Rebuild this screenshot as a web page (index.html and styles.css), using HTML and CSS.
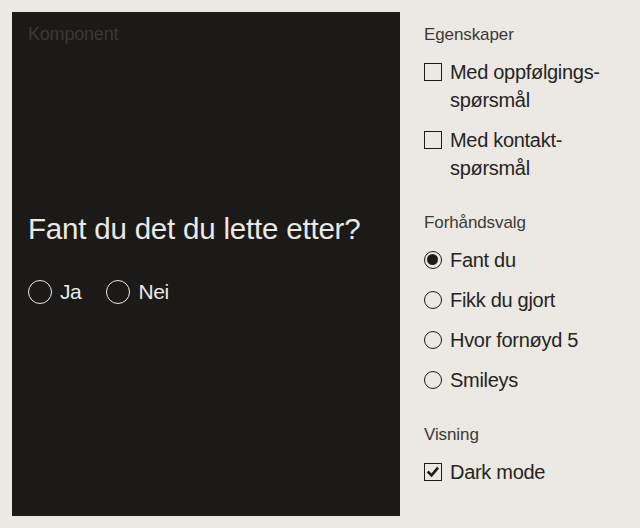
FILE: index.html
```html
<!DOCTYPE html>
<html lang="no">
<head>
<meta charset="utf-8">
<link rel="stylesheet" href="styles.css">
</head>
<body>
<div class="page">
  <section class="preview">
    <div class="preview-label">Komponent</div>
    <div class="question">
      <h1 class="q-title">Fant du det du lette etter?</h1>
      <div class="q-options">
        <label class="q-opt"><span class="q-radio"></span>Ja</label>
        <label class="q-opt"><span class="q-radio"></span>Nei</label>
      </div>
    </div>
  </section>
  <aside class="controls">
    <div class="group">
      <div class="group-label">Egenskaper</div>
      <div class="items">
        <label class="item"><span class="box"></span><span class="txt">Med oppfølgings-<br>spørsmål</span></label>
        <label class="item"><span class="box"></span><span class="txt">Med kontakt-<br>spørsmål</span></label>
      </div>
    </div>
    <div class="group">
      <div class="group-label">Forhåndsvalg</div>
      <div class="items">
        <label class="item"><span class="radio checked"></span><span class="txt">Fant du</span></label>
        <label class="item"><span class="radio"></span><span class="txt">Fikk du gjort</span></label>
        <label class="item"><span class="radio"></span><span class="txt">Hvor fornøyd 5</span></label>
        <label class="item"><span class="radio"></span><span class="txt">Smileys</span></label>
      </div>
    </div>
    <div class="group">
      <div class="group-label">Visning</div>
      <div class="items">
        <label class="item"><span class="box checked"><svg viewBox="0 0 18 18" width="18" height="18"><path d="M4.6 9.4 L7.6 12.4 L13.2 5.6" fill="none" stroke="#1d1c1a" stroke-width="2.6" stroke-linecap="square"/></svg></span><span class="txt">Dark mode</span></label>
      </div>
    </div>
  </aside>
</div>
</body>
</html>
```
FILE: styles.css
```css
* { box-sizing: border-box; }
html, body { margin: 0; padding: 0; }
body {
  background: #ece9e4;
  font-family: "Liberation Sans", Arial, sans-serif;
  color: #262422;
}
.page {
  display: flex;
  gap: 24px;
  padding: 12px;
  height: 528px;
}
.preview {
  width: 388px;
  height: 504px;
  background: #1b1a18;
  padding: 10px 16px;
  display: flex;
  flex-direction: column;
}
.preview-label {
  font-size: 18px;
  line-height: 24px;
  color: #3a3835;
  letter-spacing: -0.2px;
}
.question {
  margin-top: 165px;
}
.q-title {
  margin: 0;
  font-weight: 400;
  font-size: 29.5px;
  line-height: 36px;
  color: #ece9e4;
  letter-spacing: -0.2px;
}
.q-options {
  display: flex;
  gap: 25px;
  margin-top: 31px;
}
.q-opt {
  display: flex;
  align-items: center;
  gap: 8px;
  font-size: 21px;
  line-height: 28px;
  color: #ece9e4;
  letter-spacing: -0.4px;
}
.q-radio {
  width: 24px;
  height: 24px;
  border: 1.5px solid #ece9e4;
  border-radius: 50%;
  flex: none;
}
.controls {
  padding-top: 11px;
  display: flex;
  flex-direction: column;
  gap: 29px;
}
.group-label {
  font-size: 17px;
  line-height: 24px;
  color: #3b3936;
  letter-spacing: -0.1px;
}
.items {
  margin-top: 11px;
  display: flex;
  flex-direction: column;
  gap: 12px;
}
.item {
  display: flex;
  align-items: flex-start;
  gap: 8px;
  font-size: 20px;
  line-height: 28px;
  letter-spacing: -0.3px;
  color: #262422;
}
.box {
  width: 18px;
  height: 18px;
  border: 1.5px solid #1d1c1a;
  margin-top: 5px;
  flex: none;
  position: relative;
}
.box svg {
  position: absolute;
  left: -1.5px;
  top: -1.5px;
}
.radio {
  width: 18px;
  height: 18px;
  border: 1.5px solid #1d1c1a;
  border-radius: 50%;
  margin-top: 5px;
  flex: none;
  position: relative;
}
.radio.checked::after {
  content: "";
  position: absolute;
  left: 2px;
  top: 2px;
  width: 11px;
  height: 11px;
  border-radius: 50%;
  background: #1d1c1a;
}
```
